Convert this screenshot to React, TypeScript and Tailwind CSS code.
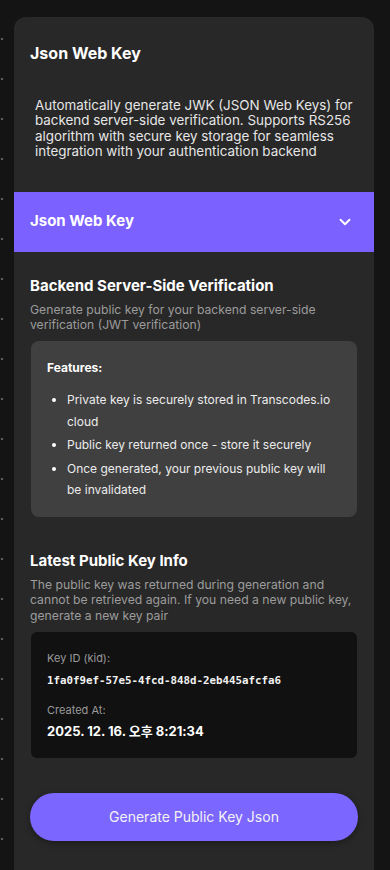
import { ChevronDown } from "lucide-react";

const features = [
  "Private key is securely stored in Transcodes.io cloud",
  "Public key returned once - store it securely",
  "Once generated, your previous public key will be invalidated",
];

export default function App() {
  return (
    <div
      className="min-h-[870px] w-[390px] overflow-hidden bg-[#141414] bg-[radial-gradient(circle,#5c5c5c_1.3px,transparent_1.6px)] [background-size:40px_40px] [background-position:-18px_-21px] pt-[17px] pl-[14px] pr-[16px] text-white"
      style={{ fontFamily: "Inter, 'Noto Sans CJK KR', sans-serif" }}
    >
      <div className="min-h-[853px] rounded-t-xl bg-[#282828] pb-8">
        {/* Header */}
        <div className="px-4 pt-6">
          <h1 className="text-[16px] font-bold leading-6">Json Web Key</h1>
          <p className="mt-[33px] px-[5px] text-[13.4px] leading-[15.4px] text-[#e6e6e6]">
            Automatically generate JWK (JSON Web Keys) for backend server-side
            verification. Supports RS256 algorithm with secure key storage for
            seamless integration with your authentication backend
          </p>
        </div>

        {/* Accordion header */}
        <button className="mt-[32px] flex h-[60px] w-full items-center justify-between bg-[#7b61ff] px-4">
          <span className="text-[15px] font-bold">Json Web Key</span>
          <ChevronDown className="mr-[4px] h-[18px] w-[18px]" strokeWidth={2.5} />
        </button>

        {/* Backend verification */}
        <div className="px-4 pt-[23px]">
          <h2 className="text-[15px] font-bold leading-[22px]">
            Backend Server-Side Verification
          </h2>
          <p className="mt-[5px] text-[12.2px] leading-[15.7px] text-[#9c9c9c]">
            Generate public key for your backend server-side verification (JWT
            verification)
          </p>

          <div className="mx-[1px] mt-[8px] rounded-lg bg-[#404040] px-4 pt-[17px] pb-[16px]">
            <p className="text-[12px] font-bold leading-5">Features:</p>
            <ul className="mt-[11px] list-disc space-y-[2px] pl-[20px] text-[12px] leading-[21.5px] text-[#ececec] marker:text-white">
              {features.map((f) => (
                <li key={f}>{f}</li>
              ))}
            </ul>
          </div>
        </div>

        {/* Latest key info */}
        <div className="px-4 pt-[33px]">
          <h2 className="text-[15px] font-bold leading-[22px]">
            Latest Public Key Info
          </h2>
          <p className="mt-[5px] text-[12.2px] leading-[15.8px] text-[#9c9c9c]">
            The public key was returned during generation and cannot be
            retrieved again. If you need a new public key, generate a new key
            pair
          </p>

          <div className="mx-[1px] mt-[8px] rounded-md bg-[#111111] px-4 pt-[18px] pb-[17px]">
            <p className="text-[11px] leading-4 text-[#9a9a9a]">Key ID (kid):</p>
            <p
              className="mt-[7px] text-[10.8px] font-bold leading-4 text-[#f2f2f2]"
              style={{ fontFamily: "'DejaVu Sans Mono', monospace" }}
            >
              1fa0f9ef-57e5-4fcd-848d-2eb445afcfa6
            </p>
            <p className="mt-[13px] text-[11px] leading-4 text-[#9a9a9a]">Created At:</p>
            <p className="mt-[3px] text-[13px] font-bold leading-5">
              2025. 12. 16. 오후 8:21:34
            </p>
          </div>
        </div>

        {/* Action */}
        <div className="px-4 pt-[35px]">
          <button className="h-[48px] w-full rounded-full bg-[#7b66ff] text-[14px] text-[#f3f3f3] shadow-[0_2px_6px_rgba(0,0,0,0.35)]">
            Generate Public Key Json
          </button>
        </div>
      </div>
    </div>
  );
}
